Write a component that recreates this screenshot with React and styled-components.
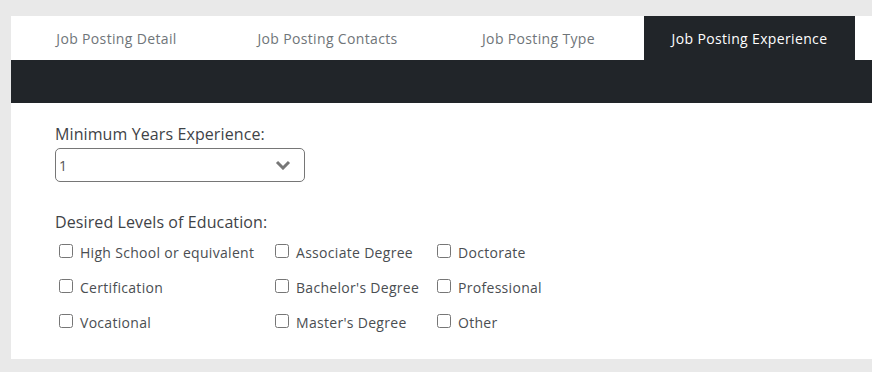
import styled, { createGlobalStyle } from "styled-components";

const GlobalStyle = createGlobalStyle`
  body {
    margin: 0;
    background: #e9e9e9;
    font-family: "Open Sans", "Liberation Sans", sans-serif;
    overflow: hidden;
  }
`;

const Page = styled.div`
  padding: 16px 0 14px 11px;
  overflow: hidden;
`;

const Card = styled.div`
  width: 900px;
  background: #fff;
`;

const TabBar = styled.div`
  display: flex;
  height: 44px;
`;

const Tab = styled.div`
  width: 211px;
  display: flex;
  align-items: center;
  justify-content: center;
  font-size: 14px;
  letter-spacing: 0.35px;
  color: ${(p) => (p.$active ? "#fff" : "#6f7579")};
  background: ${(p) => (p.$active ? "#212529" : "transparent")};
`;

const Band = styled.div`
  height: 43px;
  background: #212529;
`;

const Body = styled.div`
  padding: 20px 44px 25px;
`;

const Label = styled.div`
  font-size: 16px;
  line-height: 22px;
  letter-spacing: 0.1px;
  color: #3f4347;
`;

const SelectBox = styled.div`
  margin-top: 3px;
  height: 32px;
  border: 1px solid #767676;
  border-radius: 5px;
  display: flex;
  align-items: center;
  justify-content: space-between;
  padding: 0 13px 0 3px;
  box-sizing: content-box;
  width: 232px;
  font-size: 14px;
  color: #555;
`;

const Section = styled.div`
  margin-top: 29px;
`;

const Grid = styled.div`
  display: grid;
  grid-template-columns: 216px 162px auto;
  row-gap: 11px;
  margin-top: 7px;
`;

const Option = styled.label`
  display: flex;
  align-items: center;
  height: 24px;
  font-size: 14px;
  letter-spacing: 0.3px;
  color: #4a4e52;
  input {
    margin: 0 7px 2px 4px;
    width: 14px;
    height: 14px;
  }
`;

const options = [
  "High School or equivalent",
  "Associate Degree",
  "Doctorate",
  "Certification",
  "Bachelor's Degree",
  "Professional",
  "Vocational",
  "Master's Degree",
  "Other",
];

const tabs = [
  "Job Posting Detail",
  "Job Posting Contacts",
  "Job Posting Type",
  "Job Posting Experience",
];

export default function App() {
  return (
    <>
      <GlobalStyle />
      <Page>
        <Card>
          <TabBar>
            {tabs.map((t, i) => (
              <Tab key={t} $active={i === 3}>
                {t}
              </Tab>
            ))}
          </TabBar>
          <Band />
          <Body>
            <Label>Minimum Years Experience:</Label>
            <SelectBox>
              <span>1</span>
              <svg width="16" height="10" viewBox="0 0 16 10">
                <polyline
                  points="2,2 8,8 14,2"
                  fill="none"
                  stroke="#777"
                  strokeWidth="3"
                />
              </svg>
            </SelectBox>
            <Section>
              <Label>Desired Levels of Education:</Label>
              <Grid>
                {options.map((o) => (
                  <Option key={o}>
                    <input type="checkbox" />
                    {o}
                  </Option>
                ))}
              </Grid>
            </Section>
          </Body>
        </Card>
      </Page>
    </>
  );
}
